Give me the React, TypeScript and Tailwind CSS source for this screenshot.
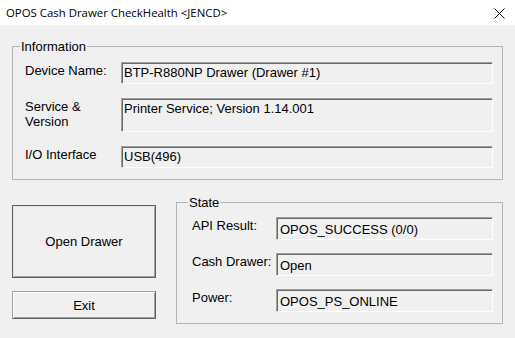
import React from "react";

const sunken =
  "border border-t-[#a0a0a0] border-l-[#a0a0a0] border-r-white border-b-white shadow-[inset_1px_1px_0_#696969] bg-[#f0f0f0] pl-[2px] pt-[2px] leading-[15px] text-[13px] text-black";

function Field({ value, className }: { value: string; className: string }) {
  return <div className={`${sunken} ${className}`}>{value}</div>;
}

export default function App() {
  return (
    <div
      className="w-[515px] h-[338px] bg-[#f0f0f0] flex flex-col overflow-hidden text-black"
      style={{ fontFamily: '"Liberation Sans", Arial, sans-serif' }}
    >
      {/* title bar */}
      <div className="h-[25px] bg-white flex items-center justify-between pl-[6px] pr-[10px]">
        <span
          className="text-[11.4px] leading-none"
          style={{ fontFamily: '"Open Sans", "Noto Sans", sans-serif' }}
        >
          OPOS Cash Drawer CheckHealth &lt;JENCD&gt;
        </span>
        <svg width="11" height="11" viewBox="0 0 11 11" className="mt-[1px]">
          <path d="M0.5 0.5 L10.5 10.5 M10.5 0.5 L0.5 10.5" stroke="#000" strokeWidth="1" />
        </svg>
      </div>

      <div className="flex flex-col px-[12px] pt-[14px]">
        {/* Information */}
        <fieldset className="border border-[#b4b4b4] w-[491px] h-[141px] pl-[12px] pr-[9px] text-[13px] leading-[15px]">
          <legend className="-ml-[5px] px-[1px]">Information</legend>
          <div className="flex flex-col gap-[14px] pt-[8px]">
            <div className="flex">
              <div className="w-[96px] pt-[1px]">Device Name:</div>
              <Field value="BTP-R880NP Drawer (Drawer #1)" className="flex-1 h-[22px]" />
            </div>
            <div className="flex">
              <div className="w-[96px] pt-[1px]">
                Service &amp;
                <br />
                Version
              </div>
              <Field value="Printer Service; Version 1.14.001" className="flex-1 h-[34px]" />
            </div>
            <div className="flex">
              <div className="w-[96px] pt-[1px]">I/O Interface</div>
              <Field value="USB(496)" className="flex-1 h-[22px]" />
            </div>
          </div>
        </fieldset>

        <div className="flex mt-[15px] gap-[20px]">
          {/* buttons */}
          <div className="flex flex-col w-[144px] pt-[10px] gap-[13px]">
            <button className="h-[73px] bg-[#f0f0f0] border border-[#5f5f5f] shadow-[inset_1px_1px_0_#e3e3e3,inset_-1px_-1px_0_#a0a0a0] text-[13px] leading-[15px]">
              Open Drawer
            </button>
            <button className="h-[28px] bg-[#f0f0f0] border border-t-[#a0a0a0] border-l-[#a0a0a0] border-r-[#5f5f5f] border-b-[#5f5f5f] shadow-[inset_1px_1px_0_#fff,inset_-1px_-1px_0_#a0a0a0] text-[13px] leading-[15px]">
              Exit
            </button>
          </div>

          {/* State */}
          <fieldset className="border border-[#b4b4b4] w-[327px] h-[129px] pl-[15px] pr-[9px] text-[13px] leading-[15px]">
            <legend className="-ml-[4px] px-[1px]">State</legend>
            <div className="flex flex-col gap-[13px] pt-[7px]">
              <div className="flex">
                <div className="w-[84px] pt-[1px]">API Result:</div>
                <Field value="OPOS_SUCCESS (0/0)" className="flex-1 h-[23px] pt-[4px] pl-[3px]" />
              </div>
              <div className="flex">
                <div className="w-[84px] pt-[1px]">Cash Drawer:</div>
                <Field value="Open" className="flex-1 h-[23px] pt-[4px] pl-[3px]" />
              </div>
              <div className="flex">
                <div className="w-[84px] pt-[1px]">Power:</div>
                <Field value="OPOS_PS_ONLINE" className="flex-1 h-[23px] pt-[4px] pl-[3px]" />
              </div>
            </div>
          </fieldset>
        </div>
      </div>
    </div>
  );
}
